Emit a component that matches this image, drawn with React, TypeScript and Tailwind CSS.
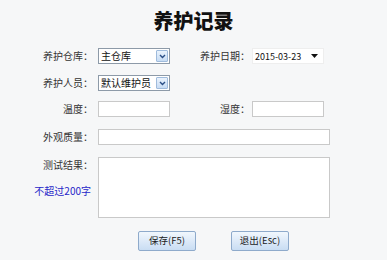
import React from "react";

const font = { fontFamily: '"Noto Sans CJK SC", "Liberation Sans", sans-serif' };

function Label({ children, className = "" }: { children: React.ReactNode; className?: string }) {
  return <div className={`shrink-0 text-right text-[10px] leading-none text-[#333] ${className}`}>{children}</div>;
}

function Combo({ value }: { value: string }) {
  return (
    <div className="flex h-[16px] w-[72px] items-center justify-between border border-[#8d9aa8] bg-white pl-[2px] pr-[1px]">
      <span className="text-[10px] leading-none text-[#111]">{value}</span>
      <span className="flex h-[12px] w-[12px] items-center justify-center rounded-[1px] border border-[#9fbbdc] bg-gradient-to-b from-[#eaf3fd] to-[#c7dcf4]">
        <svg width="7" height="5" viewBox="0 0 7 5">
          <path d="M1 1 L3.5 3.5 L6 1" fill="none" stroke="#2b4f86" strokeWidth="1.4" />
        </svg>
      </span>
    </div>
  );
}

function Box({ className = "" }: { className?: string }) {
  return <div className={`h-[16px] border border-[#c9c9c9] bg-white ${className}`} />;
}

function Btn({ children }: { children: React.ReactNode }) {
  return (
    <button className="flex h-[20px] w-[58px] items-center justify-center rounded-[2px] border border-[#8eaacb] bg-gradient-to-b from-[#f1f7fd] to-[#c9ddf3] text-[9.5px] leading-none text-[#1b1b1b]">
      {children}
    </button>
  );
}

export default function App() {
  return (
    <div className="h-[260px] w-[387px] overflow-hidden bg-[#f6f7f8]" style={font}>
      <div className="pt-[9px] text-center text-[20px] font-black leading-[24px] text-[#111]">养护记录</div>

      {/* row 1 */}
      <div className="mt-[15px] flex items-center">
        <Label className="w-[93px]">养护仓库：</Label>
        <div className="ml-[5px]">
          <Combo value="主仓库" />
        </div>
        <Label className="w-[80px]">养护日期：</Label>
        <div className="ml-[2px] flex h-[16px] w-[72px] items-center justify-between border border-[#eeeeee] bg-white pl-[2px] pr-[5px]">
          <span className="text-[9px] leading-none text-[#111]">2015-03-23</span>
          <svg width="7" height="4" viewBox="0 0 7 4">
            <path d="M0 0 H7 L3.5 4 Z" fill="#111" />
          </svg>
        </div>
      </div>

      {/* row 2 */}
      <div className="mt-[11px] flex items-center">
        <Label className="w-[93px]">养护人员：</Label>
        <div className="ml-[5px]">
          <Combo value="默认维护员" />
        </div>
      </div>

      {/* row 3 */}
      <div className="mt-[10px] flex items-center">
        <Label className="w-[93px]">温度：</Label>
        <Box className="ml-[5px] w-[72px]" />
        <Label className="w-[80px]">湿度：</Label>
        <Box className="ml-[2px] w-[72px]" />
      </div>

      {/* row 4 */}
      <div className="mt-[12px] flex items-center">
        <Label className="w-[93px]">外观质量：</Label>
        <Box className="ml-[5px] w-[232px]" />
      </div>

      {/* row 5 */}
      <div className="mt-[12px] flex items-start">
        <div className="flex w-[93px] shrink-0 flex-col items-end pt-[3px]">
          <Label>测试结果：</Label>
          <div className="mt-[16px] pr-[2px] text-[10px] leading-none text-[#2626c8]">不超过200字</div>
        </div>
        <div className="ml-[5px] h-[61px] w-[232px] border border-[#c9c9c9] bg-white" />
      </div>

      {/* buttons */}
      <div className="mt-[13px] flex gap-[35px] pl-[138px]">
        <Btn>保存(F5)</Btn>
        <Btn>退出(Esc)</Btn>
      </div>
    </div>
  );
}
